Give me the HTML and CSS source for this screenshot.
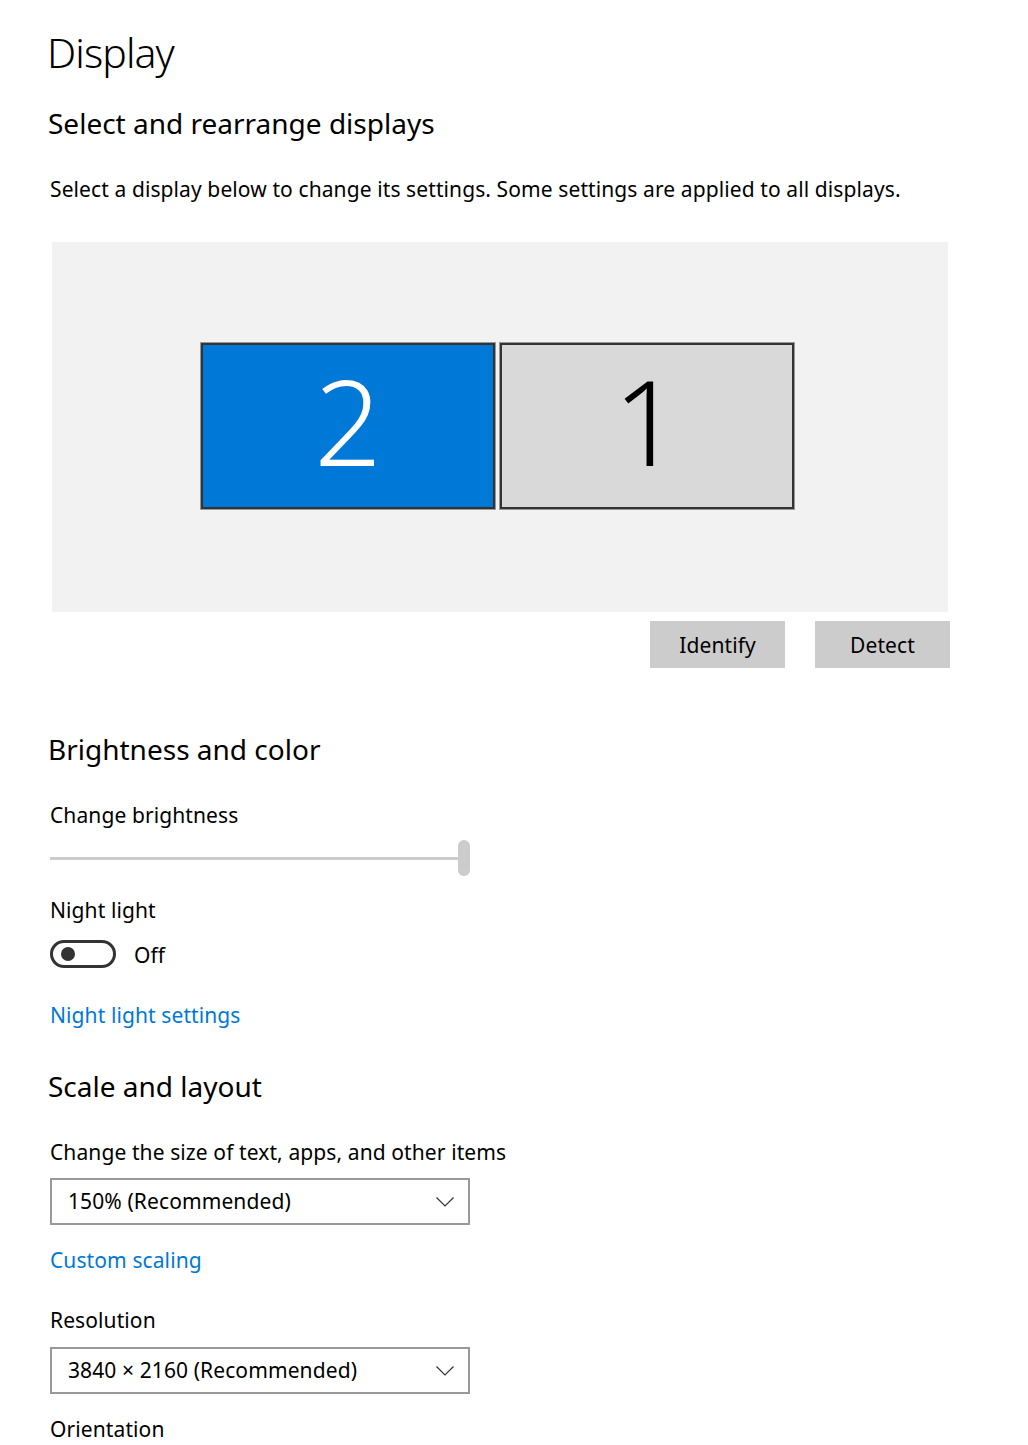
FILE: index.html
```html
<!DOCTYPE html>
<html lang="en">
<head>
<meta charset="utf-8">
<title>Display</title>
<link rel="stylesheet" href="styles.css">
</head>
<body>
<main class="page">
  <h1 class="title">Display</h1>
  <h2 class="section first">Select and rearrange displays</h2>
  <p class="text desc">Select a display below to change its settings. Some settings are applied to all displays.</p>

  <div class="canvas">
    <div class="monitors">
      <div class="monitor selected"><span class="num">2</span></div>
      <div class="monitor"><span class="num">1</span></div>
    </div>
  </div>
  <div class="buttons">
    <button class="btn">Identify</button>
    <button class="btn">Detect</button>
  </div>

  <h2 class="section brightness">Brightness and color</h2>
  <p class="text label-brightness">Change brightness</p>
  <div class="slider">
    <div class="track"></div>
    <div class="thumb"></div>
  </div>
  <p class="text label-night">Night light</p>
  <div class="toggle-row">
    <div class="toggle"><span class="knob"></span></div>
    <span class="text toggle-label">Off</span>
  </div>
  <a class="text link night-link" href="#">Night light settings</a>

  <h2 class="section scale">Scale and layout</h2>
  <p class="text label-size">Change the size of text, apps, and other items</p>
  <div class="dropdown dd-scale">
    <span class="text">150% (Recommended)</span>
    <svg class="chev" width="18" height="10" viewBox="0 0 18 10"><path d="M0.5 0.5 L9 9 L17.5 0.5" fill="none" stroke="#333" stroke-width="1.2"/></svg>
  </div>
  <a class="text link custom-link" href="#">Custom scaling</a>
  <p class="text label-res">Resolution</p>
  <div class="dropdown dd-res">
    <span class="text">3840 × 2160 (Recommended)</span>
    <svg class="chev" width="18" height="10" viewBox="0 0 18 10"><path d="M0.5 0.5 L9 9 L17.5 0.5" fill="none" stroke="#333" stroke-width="1.2"/></svg>
  </div>
  <p class="text label-orient">Orientation</p>
</main>
</body>
</html>
```

FILE: styles.css
```css
html, body {
  margin: 0;
  padding: 0;
  background: #ffffff;
}

body {
  font-family: "Noto Sans", "Open Sans", sans-serif;
  color: #000;
  overflow: hidden;
}

.page {
  padding: 27px 0 0 50px;
  width: 900px;
}

.title {
  margin: 0 0 0 -3px;
  font-size: 41px;
  line-height: 50px;
  font-weight: 300;
  letter-spacing: -0.9px;
}

.section {
  margin: 0 0 0 -2px;
  font-size: 28px;
  line-height: 36px;
  font-weight: 400;
  letter-spacing: 0;
}

.section.first { margin-top: 28px; }
.section.brightness { margin-top: 63px; }
.section.scale { margin-top: 39px; }

.text {
  font-size: 21px;
  line-height: 28px;
  letter-spacing: 0.1px;
}

p.text { margin: 0; }

.desc { margin-top: 34px !important; }

.canvas {
  margin: 39px 0 0 2px;
  width: 896px;
  height: 370px;
  background: #f2f2f2;
  display: flex;
  justify-content: center;
  padding-top: 100px;
  box-sizing: border-box;
}

.monitors {
  display: flex;
  gap: 3px;
  margin-left: -5px;
  height: 168px;
}

.monitor {
  width: 296px;
  height: 168px;
  box-sizing: border-box;
  background: #d9d9d9;
  border: 3px solid #333;
  outline: 1px solid #999;
  outline-offset: -1px;
  display: flex;
  align-items: center;
  justify-content: center;
}

.monitor.selected {
  background: #0078d7;
  color: #fff;
}

.num {
  font-size: 118px;
  line-height: 1;
  font-weight: 300;
  margin-top: -10px;
}

.buttons {
  margin-top: 9px;
  width: 900px;
  display: flex;
  justify-content: flex-end;
  gap: 30px;
}

.btn {
  width: 135px;
  height: 47px;
  border: 0;
  background: #cccccc;
  font-family: "Noto Sans", "Open Sans", sans-serif;
  font-size: 21px;
  letter-spacing: 0.1px;
  color: #000;
  padding: 0;
}

.label-brightness { margin-top: 34px !important; }

.slider {
  margin-top: 11px;
  width: 420px;
  height: 36px;
  display: flex;
  align-items: center;
}

.track {
  width: 408px;
  height: 3px;
  background: #cccccc;
}

.thumb {
  width: 12px;
  height: 36px;
  border-radius: 6px;
  background: #cccccc;
}

.label-night { margin-top: 20px !important; }

.toggle-row {
  margin-top: 16px;
  display: flex;
  align-items: center;
  gap: 18px;
  height: 28px;
}

.toggle {
  width: 66px;
  height: 28px;
  box-sizing: border-box;
  border: 3px solid #333;
  border-radius: 14px;
  display: flex;
  align-items: center;
  padding-left: 8px;
}

.knob {
  width: 14px;
  height: 14px;
  border-radius: 50%;
  background: #333;
}

.toggle-label { margin-top: 1px; }

.link {
  display: block;
  color: #0078d7;
  text-decoration: none;
  width: max-content;
}

.night-link { margin-top: 33px; }

.label-size { margin-top: 34px !important; }

.dropdown {
  margin-top: 12px;
  width: 420px;
  height: 47px;
  box-sizing: border-box;
  border: 2px solid #999999;
  display: flex;
  align-items: center;
  justify-content: space-between;
  padding: 0 14px 0 16px;
}

.dropdown .text { margin-top: -1px; }

.custom-link { margin-top: 21px; }

.label-res { margin-top: 32px !important; }

.dd-res { margin-top: 13px; }

.label-orient { margin-top: 21px !important; }
```
